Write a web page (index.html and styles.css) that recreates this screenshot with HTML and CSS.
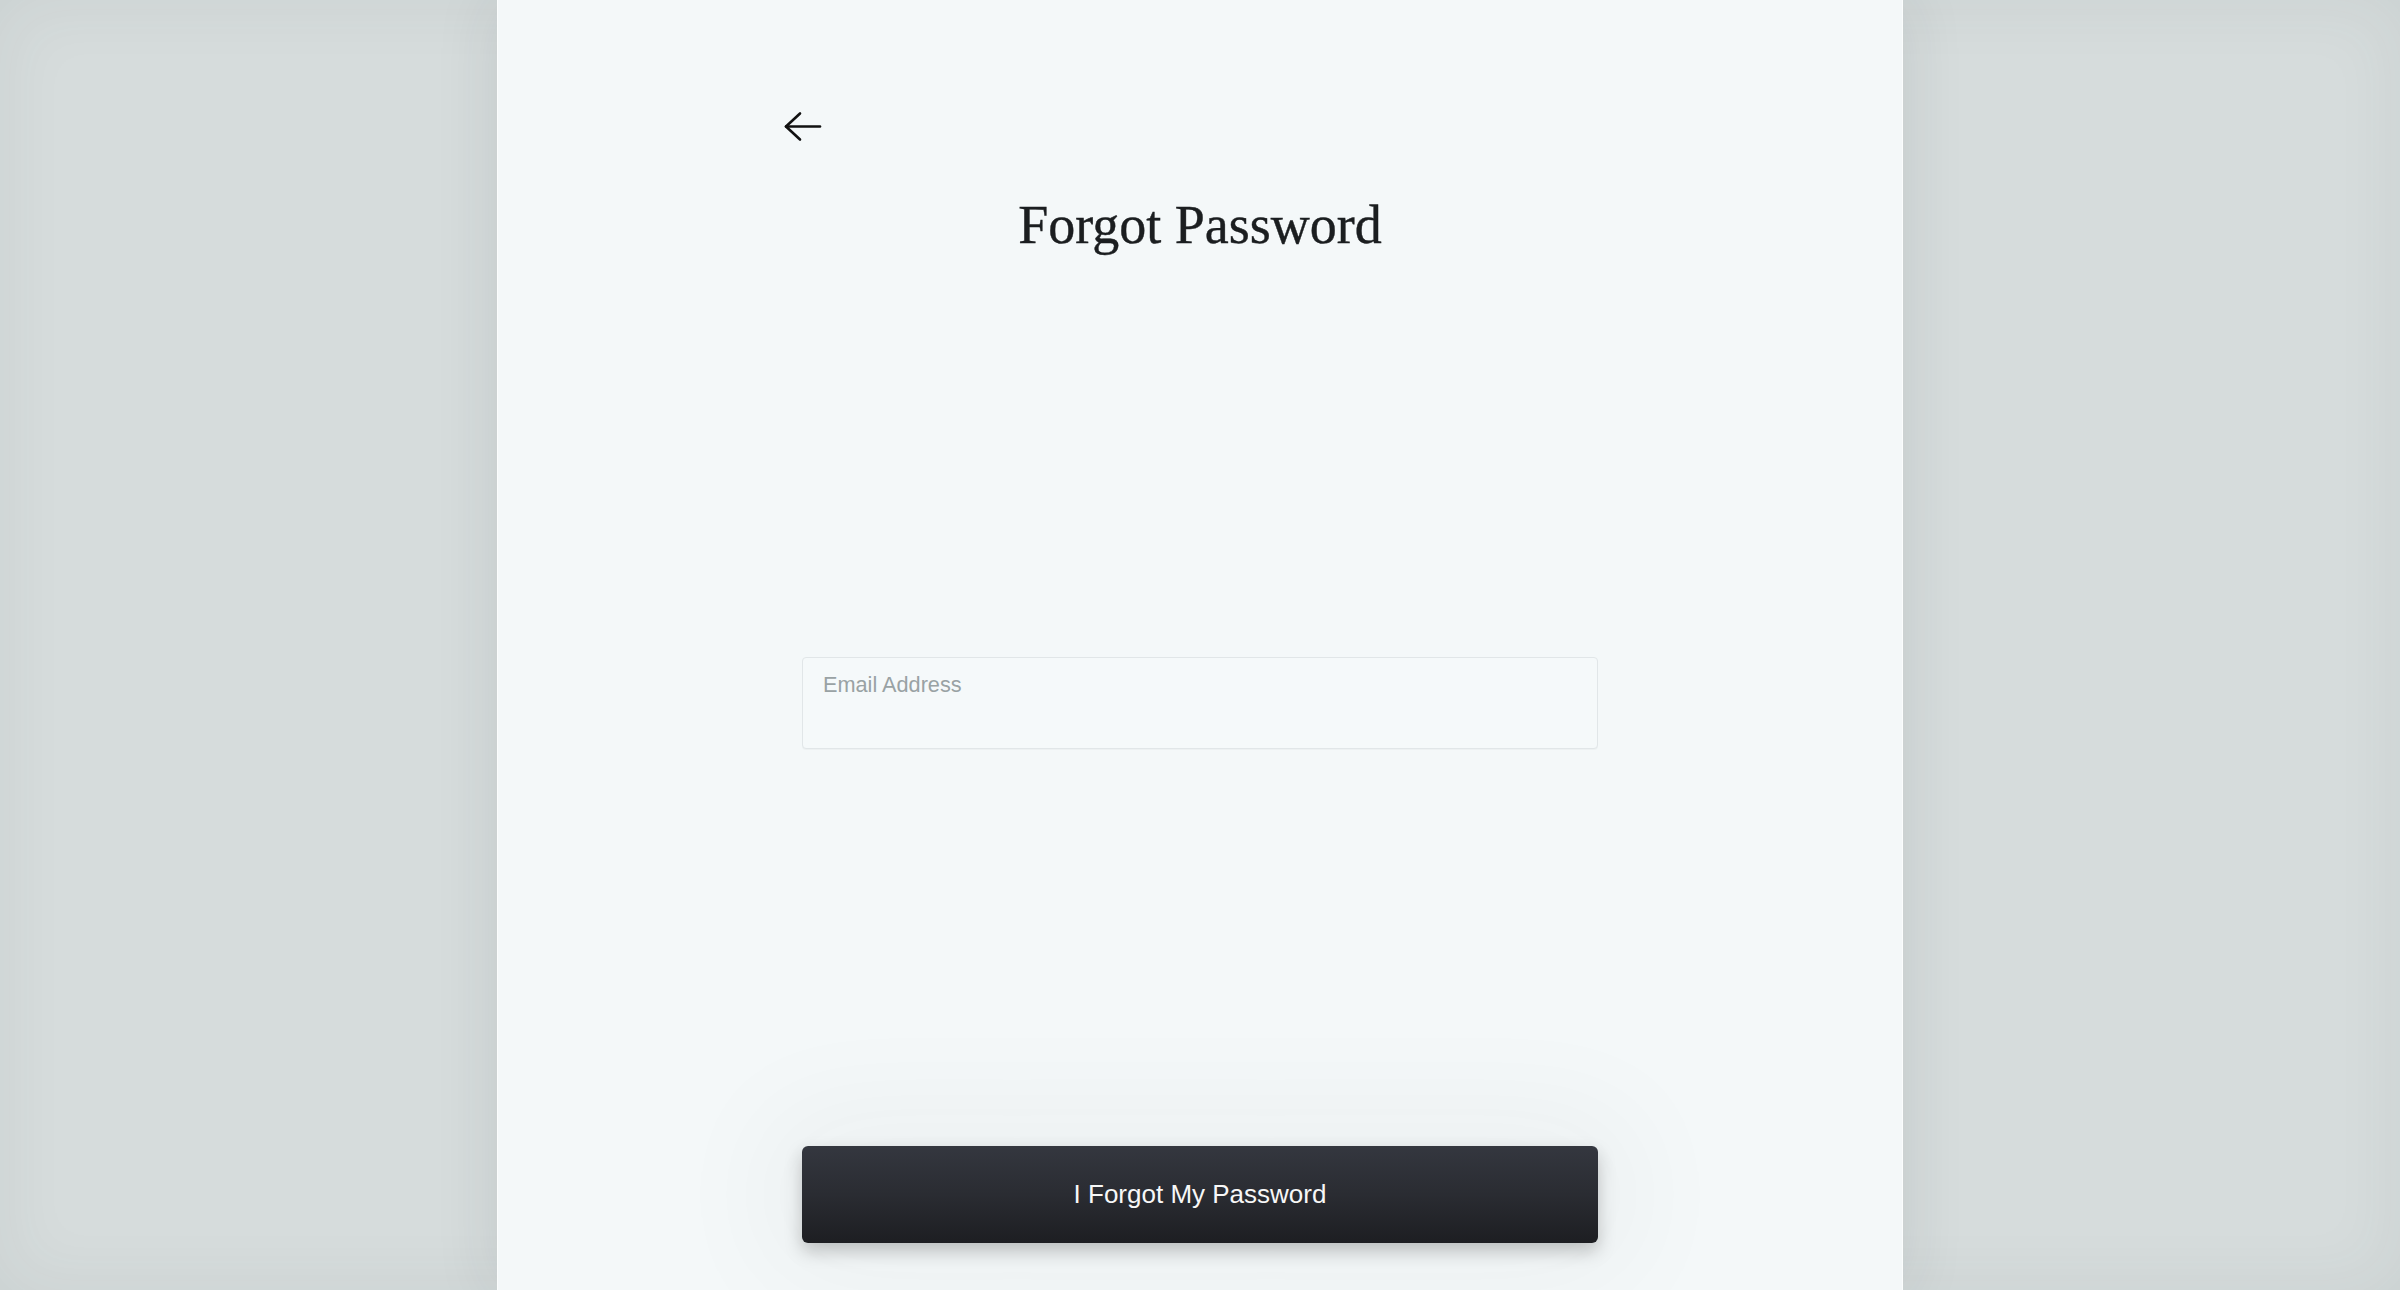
FILE: index.html
```html
<!DOCTYPE html>
<html lang="en">
<head>
<meta charset="utf-8">
<title>Forgot Password</title>
<link rel="stylesheet" href="styles.css">
</head>
<body>
<div class="stage">
  <main class="panel">
    <div class="topbar">
      <button class="back" type="button" aria-label="Back">
        <svg width="38" height="32" viewBox="0 0 38 32" fill="none" stroke="#111" stroke-width="2.6" stroke-linecap="round" stroke-linejoin="round">
          <path d="M36 15.5H2"/>
          <path d="M16 2.5L2 15.5L16 28.5"/>
        </svg>
      </button>
    </div>
    <h1 class="title">Forgot Password</h1>
    <label class="field">
      <input class="input" type="email" placeholder="Email Address">
    </label>
    <button class="submit" type="button">I Forgot My Password</button>
  </main>
</div>
</body>
</html>
```
FILE: styles.css
```css
html, body {
  margin: 0;
  padding: 0;
  height: 100%;
}
body {
  background: #d6dcdc;
  font-family: "Liberation Sans", Arial, sans-serif;
  overflow: hidden;
}
.stage {
  height: 100vh;
  box-shadow: inset 0 0 70px rgba(60, 70, 70, 0.07);
  display: flex;
  justify-content: center;
}
.panel {
  width: 1406px;
  height: 100vh;
  box-sizing: border-box;
  background: #f4f8f9;
  border-left: 1px solid #fbfdfd;
  border-right: 1px solid #fbfdfd;
  box-shadow: 0 0 60px rgba(40, 50, 55, 0.11);
  display: flex;
  flex-direction: column;
  align-items: center;
}
.topbar {
  width: 832px;
  padding-top: 111px;
  display: flex;
}
.back {
  background: none;
  border: 0;
  padding: 0;
  margin: 0;
  width: 38px;
  height: 32px;
  display: block;
  cursor: pointer;
}
.back svg { display: block; }
.title {
  margin: 55px 0 0;
  font-family: "Liberation Serif", "Times New Roman", serif;
  font-weight: 400;
  font-size: 54px;
  line-height: 54px;
  color: #1b1e20;
  -webkit-text-stroke: 0.4px #1b1e20;
}
.field {
  display: block;
  width: 796px;
  margin-top: 405px;
}
.input {
  display: block;
  width: 100%;
  height: 92px;
  box-sizing: border-box;
  margin: 0;
  padding: 15px 20px 51px;
  border: 1px solid #e1e6e8;
  border-radius: 4px;
  background: #f5f9fa;
  box-shadow: 0 1px 1px rgba(0, 0, 0, 0.03);
  font-family: "Liberation Sans", Arial, sans-serif;
  font-size: 21.7px;
  line-height: 24px;
  color: #1b1e20;
  outline: none;
}
.input::placeholder {
  color: #99a2a4;
}
.submit {
  margin-top: auto;
  margin-bottom: 47px;
  width: 796px;
  height: 97px;
  border: 0;
  border-radius: 6px;
  background: linear-gradient(180deg, #34373f 0%, #2a2c32 50%, #1d1e22 100%);
  color: #f7f7f7;
  font-family: "Liberation Sans", Arial, sans-serif;
  font-size: 26px;
  display: flex;
  align-items: center;
  justify-content: center;
  box-shadow: 0 8px 18px rgba(0, 0, 0, 0.22), 0 0 120px 30px rgba(40, 50, 55, 0.045);
  cursor: pointer;
}
```
